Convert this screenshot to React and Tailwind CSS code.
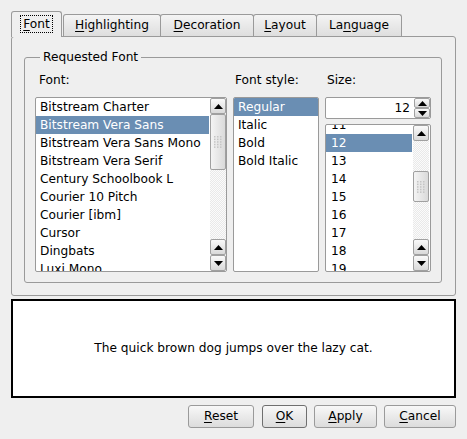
import React from "react";

const fonts = [
  "Bitstream Charter",
  "Bitstream Vera Sans",
  "Bitstream Vera Sans Mono",
  "Bitstream Vera Serif",
  "Century Schoolbook L",
  "Courier 10 Pitch",
  "Courier [ibm]",
  "Cursor",
  "Dingbats",
  "Luxi Mono",
];
const styles = ["Regular", "Italic", "Bold", "Bold Italic"];
const sizes = ["11", "12", "13", "14", "15", "16", "17", "18", "19"];

const Arrow = ({ up }) => (
  <svg width="9" height="5" viewBox="0 0 9 5">
    {up ? <path d="M0 5 L4.5 0 L9 5 Z" fill="#000" /> : <path d="M0 0 L4.5 5 L9 0 Z" fill="#000" />}
  </svg>
);

const ScrollBtn = ({ up, h = "h-[16px]" }) => (
  <div
    className={`${h} w-[16px] flex items-center justify-center rounded-[2px] border border-[#a0a0a0] bg-gradient-to-b from-[#fafafa] to-[#d9d9d9]`}
  >
    <Arrow up={up} />
  </div>
);

const Grip = () => (
  <svg width="8" height="12" viewBox="0 0 8 12">
    {[0, 1, 2].map((c) =>
      [0, 1, 2, 3, 4].map((r) => (
        <rect key={`${c}-${r}`} x={c * 3} y={r * 2.6} width="1.5" height="1.5" fill="#c4c4c4" />
      ))
    )}
  </svg>
);

const Scrollbar = ({ thumbTop, thumbH }) => (
  <div className="w-[16px] h-full flex flex-col bg-[repeating-conic-gradient(#e9e9e9_0_25%,#fbfbfb_0_50%)] bg-[length:2px_2px]">
    <ScrollBtn up />
    <div className={thumbTop} />
    <div
      className={`${thumbH} w-[16px] flex items-center justify-center rounded-[2px] border border-[#a0a0a0] bg-gradient-to-r from-[#f4f4f4] to-[#dadada]`}
    >
      <Grip />
    </div>
    <div className="flex-1" />
    <ScrollBtn up />
    <ScrollBtn />
  </div>
);

const Btn = ({ u, rest, w, def }) => (
  <button
    className={`${w} h-[23px] rounded-[3px] border ${
      def ? "border-[#6f6f6f]" : "border-[#9a9a9a]"
    } bg-gradient-to-b from-[#f8f8f8] to-[#dcdcdc] text-black`}
  >
    <span className="underline underline-offset-2">{u}</span>
    {rest}
  </button>
);

const Tab = ({ u, rest, w }) => (
  <div
    className={`${w} h-[22px] -ml-px flex items-center justify-center border border-b-0 border-[#9a9a9a] rounded-t-[3px] bg-gradient-to-b from-[#f4f4f4] to-[#dedede]`}
  >
    <span>
      {u[0]}
      <span className="underline underline-offset-2">{u[1]}</span>
      {rest}
    </span>
  </div>
);

export default function App() {
  return (
    <div className="w-[467px] h-[439px] bg-[#efefef] font-['DejaVu_Sans',sans-serif] text-[12.2px] text-black overflow-hidden leading-none">
      {/* tabs */}
      <div className="flex items-end pl-[11px] pt-[11px]">
        <div className="w-[51px] h-[26px] relative z-10 -mb-px flex items-start justify-center pt-[3px] border border-b-0 border-[#9a9a9a] rounded-t-[3px] bg-[#efefef]">
          <span className="px-[2px] py-[2px] border border-dotted border-black">
            <span className="underline underline-offset-2">F</span>ont
          </span>
        </div>
        <Tab u={["", "H"]} rest="ighlighting" w="w-[98px] ml-px" />
        <Tab u={["", "D"]} rest="ecoration" w="w-[94px]" />
        <Tab u={["", "L"]} rest="ayout" w="w-[64px]" />
        <Tab u={["La", "n"]} rest="guage" w="w-[86px]" />
      </div>

      {/* panel */}
      <div className="ml-[11px] w-[445px] h-[260px] border border-[#9a9a9a] rounded-[3px] pt-[14px] pl-[12px]">
        <fieldset className="w-[418px] h-[232px] border border-[#9a9a9a] rounded-[3px] pl-[10px]">
          <legend className="ml-[5px] px-[3px]">Requested Font</legend>
          <div className="flex gap-[6px] pt-[11px]">
            {/* font column */}
            <div className="w-[192px]">
              <div className="h-[23px] pl-[4px]">Font:</div>
              <div className="h-[175px] border border-[#9a9a9a] rounded-[2px] bg-white flex overflow-hidden">
                <div className="flex-1 overflow-hidden">
                  {fonts.map((f, i) => (
                    <div
                      key={f}
                      className={`h-[18px] pl-[4px] flex items-center whitespace-nowrap ${
                        i === 1 ? "bg-[#6a8eb3] text-white" : ""
                      }`}
                    >
                      {f}
                    </div>
                  ))}
                </div>
                <div className="ml-px">
                  <Scrollbar thumbTop="h-0" thumbH="h-[56px]" />
                </div>
              </div>
            </div>

            {/* style column */}
            <div className="w-[86px]">
              <div className="h-[23px] pl-[2px]">Font style:</div>
              <div className="h-[175px] border border-[#9a9a9a] rounded-[2px] bg-white overflow-hidden">
                {styles.map((s, i) => (
                  <div
                    key={s}
                    className={`h-[18px] pl-[4px] flex items-center ${
                      i === 0 ? "bg-[#6a8eb3] text-white" : ""
                    }`}
                  >
                    {s}
                  </div>
                ))}
              </div>
            </div>

            {/* size column */}
            <div className="w-[106px]">
              <div className="h-[23px] pl-[2px]">Size:</div>
              <div className="h-[22px] flex border border-[#9a9a9a] rounded-[2px] bg-white">
                <div className="flex-1 flex items-center justify-end pr-[4px]">12</div>
                <div className="flex flex-col">
                  <ScrollBtn up h="h-[10px]" />
                  <ScrollBtn h="h-[10px]" />
                </div>
              </div>
              <div className="mt-[5px] h-[148px] border border-[#9a9a9a] rounded-[2px] bg-white flex overflow-hidden">
                <div className="flex-1 overflow-hidden">
                  <div className="-mt-[9px]">
                    {sizes.map((s, i) => (
                      <div
                        key={s}
                        className={`h-[18px] pl-[5px] flex items-center ${
                          i === 1 ? "bg-[#6a8eb3] text-white" : ""
                        }`}
                      >
                        {s}
                      </div>
                    ))}
                  </div>
                </div>
                <div className="ml-px mr-px">
                  <Scrollbar thumbTop="h-[30px]" thumbH="h-[31px]" />
                </div>
              </div>
            </div>
          </div>
        </fieldset>
      </div>

      {/* preview */}
      <div className="ml-[11px] mt-[3px] w-[445px] h-[99px] border-2 border-black bg-white flex items-center justify-center">
        The quick brown dog jumps over the lazy cat.
      </div>

      {/* buttons */}
      <div className="flex justify-end gap-[7px] mt-[7px] pr-[11px]">
        <Btn u="R" rest="eset" w="w-[66px] mr-px" />
        <Btn u="O" rest="K" w="w-[45px]" def />
        <Btn u="A" rest="pply" w="w-[63px]" />
        <Btn u="C" rest="ancel" w="w-[72px]" />
      </div>
    </div>
  );
}
